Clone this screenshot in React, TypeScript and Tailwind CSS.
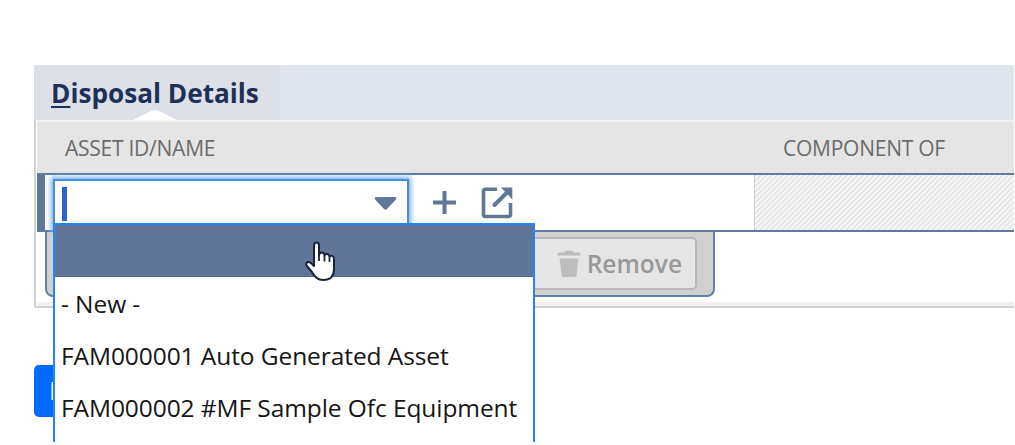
import React from 'react';

const options = ['- New -', 'FAM000001 Auto Generated Asset', 'FAM000002 #MF Sample Ofc Equipment'];

function OpenIcon() {
  return (
    <svg className="ml-[24px] mt-[11px] h-[33px] w-[33px] shrink-0" viewBox="0 0 33 33" fill="none" stroke="#607799">
      <path d="M16 3.300H4.500Q2.500 3.300 2.500 5.300V28.500Q2.500 30.500 4.500 30.500H27Q29.500 30.500 29.500 28.500V17" strokeWidth="3.6" />
      <path d="M13.500 19L26 6.500" strokeWidth="4" strokeLinecap="round" />
      <path d="M20 1.500H31.300V13.500Z" fill="#607799" stroke="none" />
    </svg>
  );
}

function TrashIcon() {
  return (
    <svg className="h-[28px] w-[24px]" viewBox="0 0 24 28" fill="#bdbdbd">
      <path d="M0.500 5.500V4Q.5 2.500 3 2.500H7Q8 .7 9.500 .7H14.500Q16 .7 17 2.500H21Q23.500 2.500 23.500 4V5.500Z" />
      <path d="M2.500 8.500H21.500L19.500 25Q19.300 27 17.500 27H6.500Q4.700 27 4.500 25Z" />
    </svg>
  );
}

function Pointer() {
  return (
    <svg className="absolute left-[250px] top-[16px] h-[42px] w-[32px]" viewBox="0 0 32 42">
      <path
        d="M9 25V4.500Q9 1.500 11.500 1.500T14 4.500V14Q14.500 11.500 17 11.500T19.500 14.500Q20.500 12.500 22.500 13T24.500 16Q25.500 14.300 27.200 14.900T29 18V28C29 34 26 39 18 39C12 39 9 35 7 31L1.500 24.500Q.500 22 3 21Q5 20.500 9 25Z"
        fill="#fff" stroke="#17233d" strokeWidth="2" strokeLinejoin="round"
      />
      <path d="M14 13V20M19.500 15V20.500M24.500 16.500V21" stroke="#17233d" strokeWidth="1.800" />
    </svg>
  );
}

function Dropdown() {
  return (
    <div className="absolute left-[53px] top-[223px] z-10 h-[219px] w-[482px] overflow-hidden border-2 border-b-0 border-[#2684f5] bg-white">
      <div className="relative h-[52px] border-b border-[#506990] bg-[#607597]">
        <Pointer />
      </div>
      {options.map((o) => (
        <div key={o} className="flex h-[52px] items-center whitespace-pre pl-[6px] pt-[2px] text-[24.5px] leading-none tracking-[-0.08px] text-[#151515]">
          <span>{o}</span>
        </div>
      ))}
    </div>
  );
}

export default function App() {
  return (
    <div className="relative h-[445px] w-[1015px] overflow-hidden bg-white pl-[34px] pr-px pt-[65px] font-['Open_Sans','Noto_Sans',sans-serif]">
      <div className="flex h-[55px] bg-[#dfe5ef]">
        <div className="relative flex w-[246px] items-center bg-[#dee0e7] pl-[17px] pt-px text-[26.2px] font-bold leading-none text-[#1d3158]">
          <span className="whitespace-pre"><span className="underline decoration-2 underline-offset-[3px]">D</span>isposal Details</span>
          <svg className="absolute bottom-0 left-[99px] h-[10px] w-[44px]" viewBox="0 0 44 10"><path d="M0 10L18 1Q22-1 26 1L44 10Z" fill="#fff" /></svg>
        </div>
      </div>
      <div className="h-[188px] border-b-2 border-l-2 border-[#d2d2d2] pl-px">
        <div className="h-[186px] border-b-4 border-[#f0f0f0]">
          <div className="flex h-[53px] items-center border-t-2 border-[#edf0f4] bg-[#e5e5e5] pl-[28px] pt-px text-[21px] leading-none tracking-[-0.25px] text-[#6b6b6b]">
            <span className="w-[718px]">ASSET ID/NAME</span>
            <span>COMPONENT OF</span>
          </div>
          <div className="flex h-[59px] border-y-2 border-[#617a9f]">
            <div className="w-[8px] shrink-0 bg-[#607799]" />
            <div className="flex w-[709px] shrink-0">
              <div className="ml-[8px] mt-[4px] flex h-[51px] w-[356px] shrink-0 border-2 border-b-0 border-[#438fdd] bg-white shadow-[0_0_5px_2px_#78b1eb]">
                <span className="ml-[7px] mt-[6px] h-[34px] w-[5px] bg-[#2d62d4]" />
                <svg className="ml-auto mr-[10px] mt-[15px] h-[15px] w-[23px]" viewBox="0 0 23 15"><path d="M2.500 1H20.500Q24 1 21 4.500L13 13Q11.500 14.500 10 13L2 4.500Q-1 1 2.500 1Z" fill="#607799" /></svg>
              </div>
              <svg className="ml-[23px] mt-[15px] h-[25px] w-[25px] shrink-0" viewBox="0 0 25 25"><path d="M12.500 1V24M1 12.500H24" stroke="#607799" strokeWidth="4" /></svg>
              <OpenIcon />
            </div>
            <div className="flex-1 border-l border-[#cccccc] bg-[repeating-linear-gradient(135deg,#e7e7e7_0px,#e5e5e5_1.2px,#fafafa_2.2px,#fafafa_3px,#e7e7e7_3.8px)]" />
          </div>
          <div className="ml-[8px] flex h-[65px] w-[670px] justify-end rounded-b-[8px] border-2 border-t-0 border-[#617fac] bg-[#d0d0d0] pr-[16px] pt-[5px]">
            <div className="flex h-[53px] w-[250px] items-center justify-end rounded-[5px] border-2 border-[#b7b7b7] bg-[#e5e5e5] pr-[13px] text-[24.5px] font-semibold leading-none text-[#999999]">
              <TrashIcon /><span className="ml-[6px] pt-px">Remove</span>
            </div>
          </div>
        </div>
      </div>
      <div className="mt-[57px] flex h-[52px] w-[20px] items-center overflow-hidden rounded-l-[5px] bg-[#006aff] pl-[15px] text-[25px] text-white">D</div>
      <Dropdown />
    </div>
  );
}
